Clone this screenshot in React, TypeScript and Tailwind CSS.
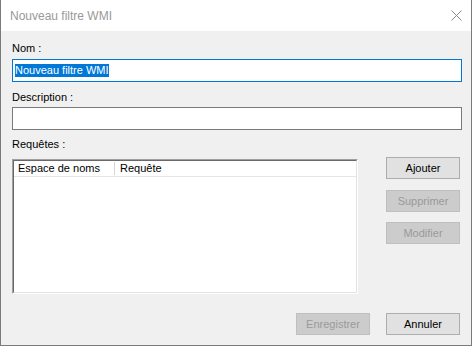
import React from 'react';

const Btn: React.FC<{ label: string; disabled?: boolean; className?: string }> = ({ label, disabled, className = '' }) => (
    <div
        className={`w-[74px] h-[22px] flex items-center justify-center border ${
            disabled ? 'bg-[#cccccc] border-[#bfbfbf] text-[#9a9a9a]' : 'bg-[#e1e1e1] border-[#adadad] text-black'
        } ${className}`}
    >
        {label}
    </div>
);

const App: React.FC = () => {
    return (
        <div className="w-[472px] h-[346px] flex flex-col bg-white border-x border-b border-[#7a7a7a] font-['Liberation_Sans',Arial,sans-serif] text-[11px] leading-[13px] text-black">
            {/* title bar */}
            <div className="h-[31px] flex-shrink-0 flex items-center justify-between pl-[9px] pr-[9px] bg-white">
                <span className="text-[12px] leading-[14px] text-[#999999] pt-[1px]">Nouveau filtre WMI</span>
                <svg width="11" height="11" viewBox="0 0 11 11" className="mr-[0px] mt-[0px]">
                    <path d="M0.5 0.5 L10.5 10.5 M10.5 0.5 L0.5 10.5" stroke="#8a8a8a" strokeWidth="1" />
                </svg>
            </div>

            {/* body */}
            <div className="flex-1 flex flex-col bg-[#f0f0f0] pl-[11px] pr-[9px] pt-[11px] pb-[10px]">
                <div>Nom :</div>
                <div className="mt-[4px] h-[23px] border border-[#0078d7] bg-white pl-[2px] flex items-center">
                    <span className="bg-[#0078d7] text-white">Nouveau filtre WMI</span>
                </div>

                <div className="mt-[9px]">Description :</div>
                <div className="mt-[3px] h-[23px] border border-[#7a7a7a] bg-white" />

                <div className="mt-[8px]">Requêtes :</div>

                <div className="mt-[6px] flex">
                    {/* list view */}
                    <div className="mt-[2px] w-[346px] h-[135px] border-t border-l border-[#a0a0a0] border-b-white border-r-white border-b border-r">
                        <div className="h-full border-t border-l border-[#696969] border-b border-r border-b-[#e3e3e3] border-r-[#e3e3e3] bg-white">
                            <div className="h-[16px] flex items-center border-b border-[#e5e5e5]">
                                <div className="w-[101px] pl-[4px] border-r border-[#d5d5d5] h-[13px]">Espace de noms</div>
                                <div className="pl-[5px]">Requête</div>
                            </div>
                        </div>
                    </div>

                    {/* buttons */}
                    <div className="ml-auto mr-[2px] flex flex-col">
                        <Btn label="Ajouter" />
                        <Btn label="Supprimer" disabled className="mt-[11px]" />
                        <Btn label="Modifier" disabled className="mt-[10px]" />
                    </div>
                </div>

                <div className="mt-auto flex justify-end gap-[16px] mr-[2px]">
                    <Btn label="Enregistrer" disabled />
                    <Btn label="Annuler" />
                </div>
            </div>
        </div>
    );
};

export default App;
